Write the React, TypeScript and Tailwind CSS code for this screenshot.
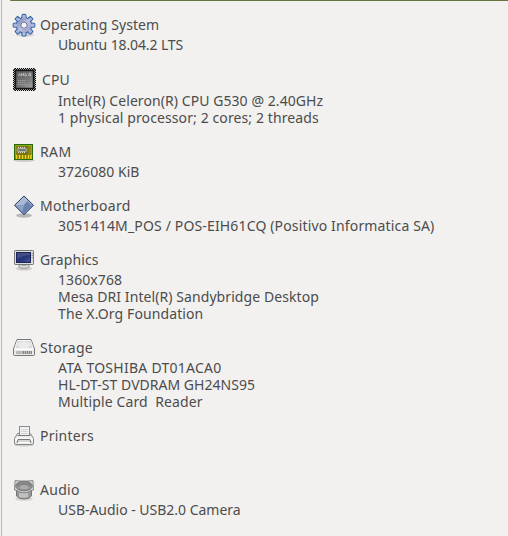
import type { ReactNode } from "react";

interface Line {
    text: string;
    spacing: string;
}

interface Device {
    title: string;
    titleClass: string;
    icon: ReactNode;
    lines: Line[];
}

const teeth = [0, 45, 90, 135, 180, 225, 270, 315];

const GearIcon = () => (
    <svg width="24" height="24" viewBox="0 0 24 24">
        <defs>
            <linearGradient id="gear" x1="0" y1="0" x2="1" y2="1">
                <stop offset="0" stopColor="#7080b5" />
                <stop offset="0.5" stopColor="#bdbfde" />
                <stop offset="1" stopColor="#9299c6" />
            </linearGradient>
        </defs>
        <ellipse cx="13" cy="21.5" rx="9" ry="2" fill="#000" opacity="0.15" />
        {teeth.map((angle) => (
            <path key={angle} d="M9.6 6 L10.2 1.4 H13.8 L14.4 6 Z" transform={`rotate(${angle} 12 12.2)`} fill="#aab8db" stroke="#2e5da3" strokeLinejoin="round" />
        ))}
        <circle cx="12" cy="12.2" r="7.6" fill="#a5afd8" stroke="#2e5da3" />
        {teeth.map((angle) => (
            <path key={angle} d="M10.3 7 L10.8 2 H13.2 L13.7 7 Z" transform={`rotate(${angle} 12 12.2)`} fill="#aab8db" />
        ))}
        <circle cx="12" cy="12.2" r="7" fill="url(#gear)" />
        <circle cx="12" cy="12.2" r="3.1" fill="#f4f4f5" stroke="#6878a8" />
    </svg>
);

const CpuIcon = () => (
    <svg width="26" height="26" viewBox="0 0 26 26">
        <defs>
            <linearGradient id="chip" x1="0" y1="0" x2="1" y2="1">
                <stop offset="0" stopColor="#5c5c5c" />
                <stop offset="0.6" stopColor="#777" />
                <stop offset="1" stopColor="#aaa" />
            </linearGradient>
        </defs>
        <path d="M3 1 H22 L24 3 V22 L22 24 H3 L1 22 V3 Z" fill="#0c0c0c" />
        <g stroke="#d4d4d4" strokeWidth="1" strokeDasharray="1 1" shapeRendering="crispEdges">
            <path d="M4 1.5 H22 M4 23.5 H22 M1.5 4 V22 M23.5 4 V22" />
            <path d="M3 2.5 H22 M3 22.5 H22 M2.5 3 V22 M22.5 3 V22" stroke="#858585" />
        </g>
        <rect x="4" y="4" width="17" height="17" fill="url(#chip)" stroke="#333" strokeWidth="0.7" />
        <path d="M6.5 9 L7.5 6.5 L8.5 9 M9.5 9 V6.5 L10.5 8 L11.5 6.5 V9 M13 6.5 V9 H14 L14.5 7.5 L13.5 6.5 M16.5 6.5 H18.5 V9 L17.5 7.5 L16 9" fill="none" stroke="#d0d0d0" strokeWidth="0.7" />
        <path d="M6 13.5 H14 M6 15.5 H13 M6 17.5 H15" stroke="#aaa" strokeWidth="0.7" strokeDasharray="1.5 0.5" />
    </svg>
);

const RamIcon = () => (
    <svg width="24" height="24" viewBox="0 0 24 24">
        <defs>
            <linearGradient id="ram" x1="0" y1="0" x2="1" y2="0">
                <stop offset="0" stopColor="#858509" />
                <stop offset="0.65" stopColor="#777012" />
                <stop offset="1" stopColor="#9b9b18" />
            </linearGradient>
        </defs>
        <ellipse cx="12" cy="20.3" rx="11" ry="1.6" fill="#000" opacity="0.16" />
        <rect x="2.5" y="4.5" width="18" height="15" fill="url(#ram)" stroke="#296a09" />
        <path d="M3.5 18 V5.5 H19.5 V18" fill="none" stroke="#87b52b" strokeWidth="0.8" />
        <rect x="3" y="15.5" width="17" height="3.5" fill="#80700d" />
        <path d="M4.5 15 V19 M7.5 15 V19 M10.5 15 V19 M13.5 15 V19 M16.5 15 V19 M19 15 V19" stroke="#f2d91d" strokeWidth="1.5" />
        <path d="M6 7.5 H14 M6 12.5 H14" stroke="#d9dbd0" strokeDasharray="1 1" />
        <path d="M5 10 L6 8.5 H14 L15 10 L14 11.5 H6 Z" fill="#747a75" stroke="#aeb3a5" />
    </svg>
);

const BoardIcon = () => (
    <svg width="24" height="24" viewBox="0 0 24 24">
        <ellipse cx="12" cy="21.5" rx="8" ry="2.2" fill="#000" opacity="0.24" />
        <path d="M12 2 L21.5 11.3 L12 20.7 L2.5 11.3 Z" fill="#8599bd" stroke="#233c67" />
        <path d="M12 3.3 L15.5 6.8 L12 11 L4 11.2 Z" fill="#a8b8d1" />
        <path d="M4 11.3 L12 11 L10.5 18 Z" fill="#8ba2c7" />
        <path d="M15.5 7 L20 11.3 L12 19.2 L10.5 18 L12 11 Z" fill="#6a81ac" />
        <path d="M4 11.2 L12 3.3 L20 11.3" fill="none" stroke="#c3cede" strokeWidth="0.8" />
    </svg>
);

const MonitorIcon = () => (
    <svg width="24" height="24" viewBox="0 0 24 24">
        <defs>
            <linearGradient id="screen" x1="0" y1="0" x2="1" y2="1">
                <stop offset="0" stopColor="#252f68" />
                <stop offset="0.6" stopColor="#29377b" />
                <stop offset="1" stopColor="#4959a4" />
            </linearGradient>
        </defs>
        <ellipse cx="12" cy="20.5" rx="8" ry="2" fill="#000" opacity="0.15" />
        <ellipse cx="12" cy="18" rx="5" ry="2.3" fill="#deded9" stroke="#858984" strokeWidth="0.8" />
        <path d="M9.5 16 H14.5 V18 H9.5 Z" fill="#aaada8" />
        <rect x="2.5" y="2.5" width="19" height="14" rx="0.7" fill="#dededb" stroke="#777b76" />
        <rect x="4.5" y="4.5" width="14" height="10" fill="url(#screen)" stroke="#1d2458" />
        <path d="M5 5 H18 V7 Q10 7.5 5 11 Z" fill="#737eb1" opacity="0.35" />
        <path d="M19.5 5.5 H21 M19.5 7.5 H21 M19.5 9.5 H21" stroke="#777b76" strokeWidth="0.7" />
    </svg>
);

const DriveIcon = () => (
    <svg width="24" height="24" viewBox="0 0 24 24">
        <path d="M5 3.5 H19 L22.5 13 V18.5 Q22.5 19.5 21.5 19.5 H2.5 Q1.5 19.5 1.5 18.5 V13 Z" fill="#e9e9e8" stroke="#777" />
        <path d="M5.5 4.5 H18.5 L21.2 12.5 H2.8 Z" fill="#d9dad8" stroke="#fafafa" strokeWidth="0.8" />
        <ellipse cx="12" cy="8.8" rx="6.5" ry="3.4" fill="#eaebea" />
        <path d="M2.5 13.5 H21.5" stroke="#fff" />
        <rect x="4" y="15" width="16" height="3" rx="0.5" fill="#b9bab8" />
        <path d="M11.5 15 V18 M13.5 15 V18 M15.5 15 V18 M17.5 15 V18 M19.5 15 V18" stroke="#858585" />
    </svg>
);

const PrinterIcon = () => (
    <svg width="24" height="24" viewBox="0 0 24 24">
        <ellipse cx="12" cy="21" rx="10" ry="1.5" fill="#000" opacity="0.15" />
        <path d="M5.5 9.5 H18.5 L21.5 14.5 V19 Q21.5 20.5 20 20.5 H4 Q2.5 20.5 2.5 19 V14.5 Z" fill="#ededec" stroke="#858585" />
        <rect x="7.5" y="2.5" width="10" height="9" fill="#f3f3f3" stroke="#8a8a8a" />
        <path d="M9 5.5 H16 M9 7.5 H16 M9 9.5 H16" stroke="#d2d2d2" />
        <path d="M5.5 11.5 H18.5" stroke="#777" />
        <path d="M3.5 14 H20.5 V17 H3.5 Z" fill="#fafafa" />
        <path d="M5 19 L6 15.5 H18 L19 19" fill="#d5d5d4" stroke="#777" />
        <path d="M6 18.5 H18" stroke="#fff" />
    </svg>
);

const SpeakerIcon = () => (
    <svg width="24" height="24" viewBox="0 0 24 24">
        <ellipse cx="12" cy="20.8" rx="9" ry="2" fill="#000" opacity="0.12" />
        <path d="M4.5 11 V18 Q7 21 12 21 Q17 21 19.5 18 V11 Z" fill="#989898" stroke="#777" />
        <path d="M7 15 V19 Q12 20.5 16 19 V15" fill="#c0c0c0" />
        <path d="M3 2.5 Q12 4 21 2.5 L21.5 12 Q19 12.3 16 14.2 Q12 15.5 8 14.2 Q5 12.3 2.5 12 Z" fill="#d4d4d3" stroke="#777" strokeWidth="0.8" />
        <ellipse cx="12" cy="8" rx="8.3" ry="4.8" fill="#999" stroke="#6a6a6a" strokeWidth="0.9" />
        <ellipse cx="12" cy="7.2" rx="7" ry="3" fill="#858585" />
        <ellipse cx="12" cy="9" rx="4.5" ry="2" fill="#aaa" />
    </svg>
);

const devices: Device[] = [
    { title: "Operating System", titleClass: "h-6 tracking-[0.08px]", icon: <GearIcon />, lines: [{ text: "Ubuntu 18.04.2 LTS", spacing: "tracking-[-0.12px]" }] },
    {
        title: "CPU",
        titleClass: "h-[26px] tracking-[0.1px]",
        icon: <CpuIcon />,
        lines: [
            { text: "Intel(R) Celeron(R) CPU G530 @ 2.40GHz", spacing: "tracking-[0.07px]" },
            { text: "1 physical processor; 2 cores; 2 threads", spacing: "tracking-[0.1px]" },
        ],
    },
    { title: "RAM", titleClass: "h-6 tracking-[0.4px]", icon: <RamIcon />, lines: [{ text: "3726080 KiB", spacing: "tracking-[0.03px]" }] },
    { title: "Motherboard", titleClass: "h-6 tracking-[0.27px]", icon: <BoardIcon />, lines: [{ text: "3051414M_POS / POS-EIH61CQ (Positivo Informatica SA)", spacing: "tracking-[0.15px]" }] },
    {
        title: "Graphics",
        titleClass: "h-6 tracking-[0.08px]",
        icon: <MonitorIcon />,
        lines: [
            { text: "1360x768", spacing: "tracking-[0.08px]" },
            { text: "Mesa DRI Intel(R) Sandybridge Desktop", spacing: "tracking-[0.08px]" },
            { text: "The X.Org Foundation", spacing: "tracking-[0.1px]" },
        ],
    },
    {
        title: "Storage",
        titleClass: "h-6 tracking-[0.28px]",
        icon: <DriveIcon />,
        lines: [
            { text: "ATA TOSHIBA DT01ACA0", spacing: "tracking-[0.26px]" },
            { text: "HL-DT-ST DVDRAM GH24NS95", spacing: "tracking-[0.02px]" },
            { text: "Multiple Card  Reader", spacing: "tracking-[0.12px]" },
        ],
    },
    { title: "Printers", titleClass: "h-6 tracking-[0.25px]", icon: <PrinterIcon />, lines: [{ text: "", spacing: "" }] },
    { title: "Audio", titleClass: "h-6 tracking-[0.3px]", icon: <SpeakerIcon />, lines: [{ text: "USB-Audio - USB2.0 Camera", spacing: "tracking-[-0.02px]" }] },
];

const DeviceSection = ({ device }: { device: Device }) => (
    <section>
        <div className={`flex items-center gap-1 ${device.titleClass}`}>
            {device.icon}
            <h2 className="pb-0.5">{device.title}</h2>
        </div>
        {device.lines.map((line) => (
            <p key={line.text} className={`ml-[46px] h-[17px] leading-[15px] ${line.spacing}`}>{line.text}</p>
        ))}
    </section>
);

const App = () => {
    return (
        <div className="flex h-[536px] w-[508px] overflow-hidden bg-[#f2f1f0] font-['Noto_Sans',sans-serif] text-[14px] leading-[17px] whitespace-pre text-[#4c4c4c]">
            <div className="ml-px w-px bg-[#b8b6b3]" />
            <main className="flex-1">
                <div className="ml-2 h-px rounded-tl-sm bg-[#66753f]" />
                <div className="flex flex-col gap-[13px] pt-3 pl-[10px]">
                    {devices.map((device) => (
                        <DeviceSection key={device.title} device={device} />
                    ))}
                </div>
            </main>
        </div>
    );
};

export default App;
